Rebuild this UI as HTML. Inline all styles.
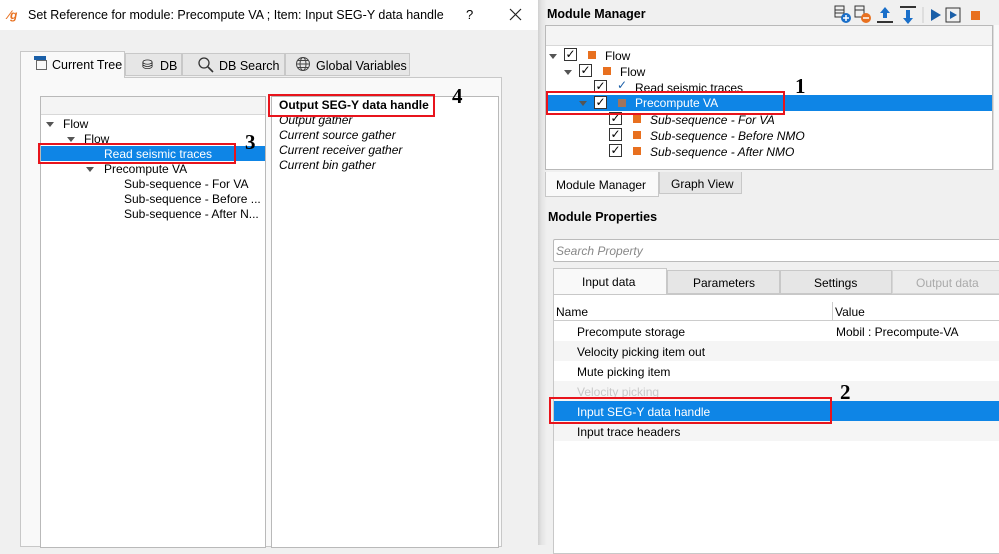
<!DOCTYPE html>
<html><head><meta charset="utf-8">
<style>
*{margin:0;padding:0;box-sizing:border-box}
body{width:999px;height:545px;overflow:hidden;background:#f0f0f0;font-family:"Liberation Sans","DejaVu Sans",sans-serif;font-size:12px;color:#000;position:relative}
.a{position:absolute;white-space:nowrap}
.red{position:absolute;border:2px solid #e8141c}
.num{position:absolute;font-family:"Liberation Serif",serif;font-weight:bold;font-size:21px}
.cb{position:absolute;width:13px;height:13px;border:1px solid #333;background:#fff;font-size:12px;line-height:11px;text-align:center;font-weight:bold}
.sq{position:absolute;width:8px;height:8px;background:#e8701f}
.tri{position:absolute;width:0;height:0;border-left:4px solid transparent;border-right:4px solid transparent;border-top:5px solid #555}
.it{font-style:italic}
</style></head><body>
<!-- Left dialog -->
<div class="a" style="left:0;top:0;width:538px;height:30px;background:#fff"></div>
<div class="a" style="left:8px;top:8px;font-size:12px;color:#e8701f;font-weight:bold;font-style:italic">⁄g</div>
<div class="a" style="left:28px;top:8px;font-size:12.5px">Set Reference for module: Precompute VA ; Item: Input SEG-Y data handle</div>
<div class="a" style="left:466px;top:7px;font-size:13px">?</div>
<svg class="a" style="left:509px;top:8px" width="13" height="13"><path d="M1 1L12 12M12 1L1 12" stroke="#222" stroke-width="1.2"/></svg>
<!-- tabs -->
<div class="a" style="left:20px;top:51px;width:105px;height:27px;background:#f9f9f9;border:1px solid #c8c8c8;border-bottom:none"></div>
<div class="a" style="left:34px;top:56px;width:12px;height:14px;border-top:4px solid #1a5fa8"></div>
<div class="a" style="left:36px;top:60px;width:11px;height:10px;border:1px solid #666"></div>
<div class="a" style="left:52px;top:58px;font-size:12.5px">Current Tree</div>
<div class="a" style="left:125px;top:53px;width:57px;height:23px;background:#e6e6e6;border:1px solid #c8c8c8"></div>
<div class="a" style="left:142px;top:57px;font-size:13px">⛁</div><div class="a" style="left:160px;top:59px;font-size:12.5px">DB</div>
<div class="a" style="left:182px;top:53px;width:103px;height:23px;background:#e6e6e6;border:1px solid #c8c8c8"></div>
<svg class="a" style="left:197px;top:56px" width="18" height="18"><circle cx="7" cy="7" r="5" fill="none" stroke="#333" stroke-width="1.3"/><path d="M11 11l5 5" stroke="#333" stroke-width="1.6"/></svg>
<div class="a" style="left:219px;top:59px;font-size:12.5px">DB Search</div>
<div class="a" style="left:285px;top:53px;width:125px;height:23px;background:#e6e6e6;border:1px solid #c8c8c8"></div>
<svg class="a" style="left:295px;top:56px" width="16" height="16"><circle cx="8" cy="8" r="6.5" fill="none" stroke="#444"/><ellipse cx="8" cy="8" rx="3" ry="6.5" fill="none" stroke="#444"/><path d="M1.5 8h13M3 4.5h10M3 11.5h10" stroke="#444"/></svg>
<div class="a" style="left:316px;top:59px;font-size:12.5px">Global Variables</div>
<div class="a" style="left:20px;top:77px;width:482px;height:470px;background:#f9f9f9;border:1px solid #c8c8c8"></div>
<div class="a" style="left:21px;top:77px;width:103px;height:2px;background:#f9f9f9"></div>
<!-- left tree -->
<div class="a" style="left:40px;top:96px;width:226px;height:452px;background:#fff;border:1px solid #b9b9b9"></div>
<div class="a" style="left:41px;top:97px;width:224px;height:18px;background:#f4f4f4;border-bottom:1px solid #d8d8d8"></div>
<div class="tri" style="left:46px;top:122px"></div><div class="a" style="left:63px;top:117px">Flow</div>
<div class="tri" style="left:67px;top:137px"></div><div class="a" style="left:84px;top:132px">Flow</div>
<div class="a" style="left:41px;top:146px;width:224px;height:15px;background:#0e85e6"></div>
<div class="a" style="left:104px;top:147px;color:#fff">Read seismic traces</div>
<div class="tri" style="left:86px;top:167px"></div><div class="a" style="left:104px;top:162px">Precompute VA</div>
<div class="a" style="left:124px;top:177px">Sub-sequence - For VA</div>
<div class="a" style="left:124px;top:192px">Sub-sequence - Before ...</div>
<div class="a" style="left:124px;top:207px">Sub-sequence - After N...</div>
<div class="red" style="left:38px;top:143px;width:198px;height:21px"></div>
<div class="num" style="left:245px;top:130px">3</div>
<!-- right list -->
<div class="a" style="left:271px;top:96px;width:228px;height:452px;background:#fff;border:1px solid #b9b9b9"></div>
<div class="a" style="left:279px;top:98px;font-weight:bold">Output SEG-Y data handle</div>
<div class="a it" style="left:279px;top:113px">Output gather</div>
<div class="a it" style="left:279px;top:128px">Current source gather</div>
<div class="a it" style="left:279px;top:143px">Current receiver gather</div>
<div class="a it" style="left:279px;top:158px">Current bin gather</div>
<div class="red" style="left:268px;top:94px;width:167px;height:23px"></div>
<div class="num" style="left:452px;top:84px">4</div>

<!-- Right panel -->
<div class="a" style="left:538px;top:0;width:9px;height:545px;background:linear-gradient(90deg,#d0d0d0,#e4e4e4 40%,#f0f0f0)"></div>
<div class="a" style="left:547px;top:7px;font-weight:bold;font-size:12.5px">Module Manager</div>
<svg class="a" style="left:832px;top:4px" width="167" height="22" viewBox="0 0 167 22">
<rect x="3" y="2" width="9" height="11" fill="none" stroke="#333"/><line x1="3" y1="6" x2="12" y2="6" stroke="#333"/><line x1="3" y1="9" x2="12" y2="9" stroke="#333"/><circle cx="14" cy="14" r="5" fill="#1a6fc9"/><path d="M11 14h6M14 11v6" stroke="#fff" stroke-width="1.5"/>
<rect x="23" y="2" width="9" height="11" fill="none" stroke="#333"/><line x1="23" y1="6" x2="32" y2="6" stroke="#333"/><circle cx="34" cy="14" r="5" fill="#e8701f"/><path d="M31 14h6" stroke="#fff" stroke-width="1.5"/>
<path d="M53 3l-5 6h3v5h4v-5h3z" fill="#1a6fc9"/><rect x="45" y="17" width="16" height="2" fill="#333"/>
<rect x="68" y="2" width="16" height="2" fill="#333"/><path d="M76 20l-5-6h3v-8h4v8h3z" fill="#1a6fc9"/>
<line x1="91" y1="3" x2="91" y2="19" stroke="#ccc"/>
<path d="M99 5l10 6-10 6z" fill="#1a5fa8"/>
<rect x="114" y="4" width="14" height="14" fill="none" stroke="#333"/><path d="M118 7l7 4-7 4z" fill="#1a5fa8"/>
<rect x="139" y="7" width="9" height="9" fill="#e8701f"/>
</svg>
<div class="a" style="left:545px;top:25px;width:448px;height:145px;background:#fff;border:1px solid #b9b9b9"></div>
<div class="a" style="left:546px;top:26px;width:446px;height:20px;background:#f4f4f4;border-bottom:1px solid #d8d8d8"></div>
<div class="a" style="left:993px;top:25px;width:6px;height:145px;background:#f9f9f9;border-left:1px solid #ddd"></div>
<div class="tri" style="left:549px;top:54px"></div><div class="cb" style="left:564px;top:48px">✓</div><div class="sq" style="left:588px;top:51px"></div><div class="a" style="left:605px;top:49px">Flow</div>
<div class="tri" style="left:564px;top:70px"></div><div class="cb" style="left:579px;top:64px">✓</div><div class="sq" style="left:603px;top:67px"></div><div class="a" style="left:620px;top:65px">Flow</div>
<div class="cb" style="left:594px;top:80px">✓</div><div class="a" style="left:617px;top:78px;color:#1a5fa8;font-weight:bold">✓</div><div class="a" style="left:635px;top:81px">Read seismic traces</div>
<div class="a" style="left:546px;top:95px;width:446px;height:16px;background:#0e85e6"></div>
<div class="tri" style="left:579px;top:101px"></div><div class="cb" style="left:594px;top:96px">✓</div><div class="sq" style="left:618px;top:99px;background:#a0745e"></div><div class="a" style="left:635px;top:96px;color:#fff">Precompute VA</div>
<div class="cb" style="left:609px;top:112px">✓</div><div class="sq" style="left:633px;top:115px"></div><div class="a it" style="left:650px;top:113px">Sub-sequence - For VA</div>
<div class="cb" style="left:609px;top:128px">✓</div><div class="sq" style="left:633px;top:131px"></div><div class="a it" style="left:650px;top:129px">Sub-sequence - Before NMO</div>
<div class="cb" style="left:609px;top:144px">✓</div><div class="sq" style="left:633px;top:147px"></div><div class="a it" style="left:650px;top:145px">Sub-sequence - After NMO</div>
<div class="red" style="left:546px;top:91px;width:239px;height:24px"></div>
<div class="num" style="left:795px;top:74px">1</div>
<!-- mm tabs -->
<div class="a" style="left:545px;top:172px;width:114px;height:25px;background:#f9f9f9;border:1px solid #c8c8c8;border-top:none"></div>
<div class="a" style="left:556px;top:178px">Module Manager</div>
<div class="a" style="left:659px;top:172px;width:83px;height:22px;background:#e6e6e6;border:1px solid #c8c8c8;border-top:none"></div>
<div class="a" style="left:671px;top:177px">Graph View</div>
<div class="a" style="left:548px;top:210px;font-weight:bold;font-size:12.5px">Module Properties</div>
<div class="a" style="left:553px;top:239px;width:450px;height:23px;background:#fff;border:1px solid #bbb;border-radius:2px"></div>
<div class="a it" style="left:556px;top:244px;color:#888">Search Property</div>
<!-- props tabs -->
<div class="a" style="left:553px;top:268px;width:114px;height:27px;background:#f9f9f9;border:1px solid #c8c8c8;border-bottom:none"></div>
<div class="a" style="left:582px;top:275px">Input data</div>
<div class="a" style="left:667px;top:270px;width:113px;height:24px;background:#e6e6e6;border:1px solid #c8c8c8"></div>
<div class="a" style="left:693px;top:276px">Parameters</div>
<div class="a" style="left:780px;top:270px;width:112px;height:24px;background:#e6e6e6;border:1px solid #c8c8c8"></div>
<div class="a" style="left:814px;top:276px">Settings</div>
<div class="a" style="left:892px;top:270px;width:110px;height:24px;background:#ececec;border:1px solid #d6d6d6"></div>
<div class="a" style="left:916px;top:276px;color:#aaa">Output data</div>
<div class="a" style="left:553px;top:294px;width:450px;height:260px;background:#fff;border:1px solid #c8c8c8"></div>
<div class="a" style="left:554px;top:302px;width:450px;height:19px;background:#fff;border-bottom:1px solid #ccc"></div>
<div class="a" style="left:832px;top:302px;width:1px;height:19px;background:#ccc"></div>
<div class="a" style="left:556px;top:305px">Name</div><div class="a" style="left:835px;top:305px">Value</div>
<div class="a" style="left:554px;top:341px;width:450px;height:20px;background:#f5f5f5"></div>
<div class="a" style="left:554px;top:381px;width:450px;height:20px;background:#f5f5f5"></div>
<div class="a" style="left:554px;top:421px;width:450px;height:20px;background:#f5f5f5"></div>
<div class="a" style="left:554px;top:401px;width:450px;height:20px;background:#0e85e6"></div>
<div class="a" style="left:577px;top:325px">Precompute storage</div><div class="a" style="left:836px;top:325px">Mobil : Precompute-VA</div>
<div class="a" style="left:577px;top:345px">Velocity picking item out</div>
<div class="a" style="left:577px;top:365px">Mute picking item</div>
<div class="a" style="left:577px;top:385px;color:#c8c8c8">Velocity picking</div>
<div class="a" style="left:577px;top:405px;color:#fff">Input SEG-Y data handle</div>
<div class="a" style="left:577px;top:425px">Input trace headers</div>
<div class="red" style="left:549px;top:397px;width:283px;height:27px"></div>
<div class="num" style="left:840px;top:380px">2</div>
</body></html>
